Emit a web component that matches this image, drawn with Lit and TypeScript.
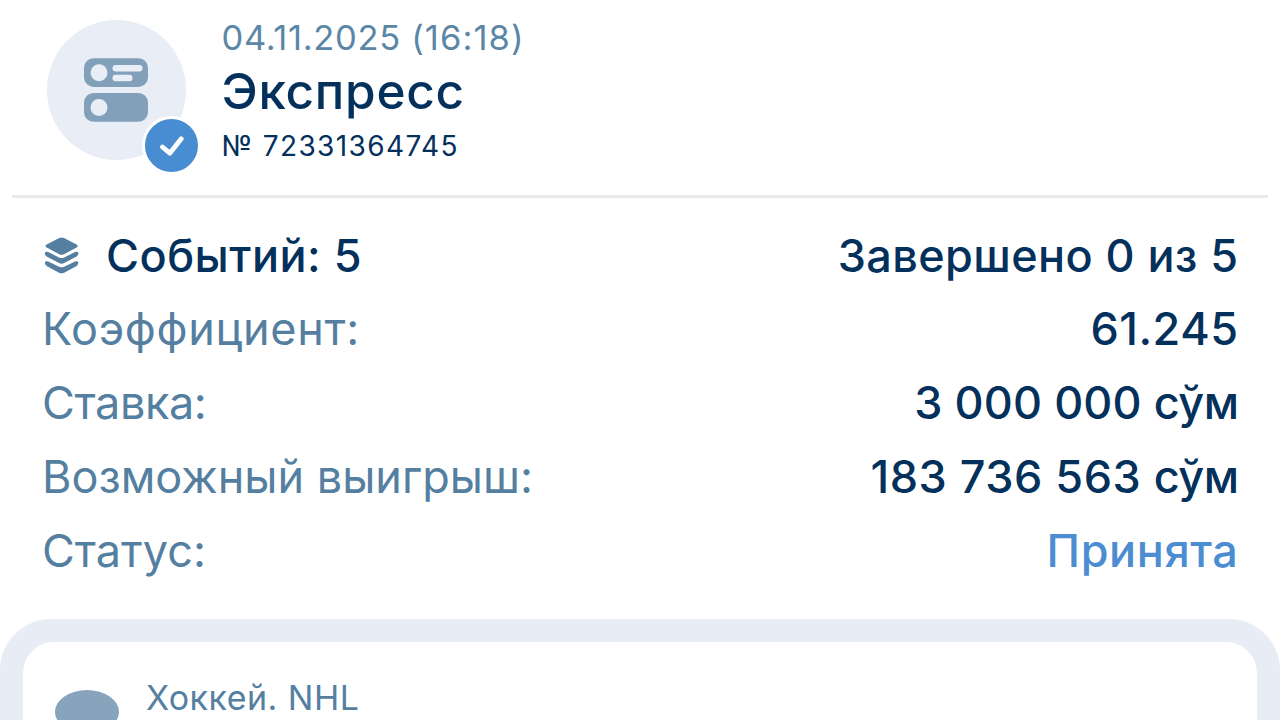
import { LitElement, html, css, svg } from "lit";
import { customElement } from "lit/decorators.js";

const couponIcon = svg`
  <svg class="coupon" viewBox="0 0 64 64">
    <rect x="0" y="0.3" width="64" height="28.6" rx="9.5" fill="#82a0ba" />
    <rect x="0" y="35" width="64" height="28.7" rx="9.5" fill="#82a0ba" />
    <circle cx="15" cy="14.7" r="8.5" fill="#e9edf5" />
    <circle cx="15" cy="49.4" r="8.5" fill="#e9edf5" />
    <rect x="28.5" y="7" width="30" height="6.6" rx="3.3" fill="#e9edf5" />
    <rect x="28.5" y="16.8" width="20" height="6.4" rx="3.2" fill="#e9edf5" />
  </svg>`;

const checkIcon = svg`
  <svg class="check" viewBox="0 0 53 53">
    <path d="M17.4 28 L24.8 34.2 L36.3 19.8" fill="none" stroke="#fff" stroke-width="4.8" stroke-linecap="round" stroke-linejoin="round" />
  </svg>`;

const layersIcon = svg`
  <svg class="layers" viewBox="0 0 36 38">
    <g fill="#557fa1">
      <path d="M15.2 1 Q17.6 0 20 1 L33 7.8 Q34.8 9 33 10.2 L20 17.2 Q17.6 18.2 15.2 17.2 L2.2 10.2 Q0.4 9 2.2 7.8 Z" />
      <path d="M1 15.6 Q1.6 14.2 4.2 15 L15 20.6 Q17.6 21.6 20.2 20.6 L31 15 Q33.6 14.2 34.2 15.6 Q34.8 18.2 32.6 19.4 L20.2 26.1 Q17.6 27.2 15 26.1 L2.6 19.4 Q0.4 18.2 1 15.6 Z" />
      <path d="M1 25.2 Q1.6 23.8 4.2 24.6 L15 29.8 Q17.6 30.8 20.2 29.8 L31 24.6 Q33.6 23.8 34.2 25.2 Q34.8 27.8 32.6 29 L20.2 35.7 Q17.6 36.8 15 35.7 L2.6 29 Q0.4 27.8 1 25.2 Z" />
    </g>
  </svg>`;

@customElement("app-root")
export class AppRoot extends LitElement {
  static styles = css`
    :host {
      display: flex;
      flex-direction: column;
      height: 720px;
      overflow: hidden;
      background: #fff;
      color: #04305c;
      font-family: Inter, "Liberation Sans", sans-serif;
      white-space: nowrap;
    }
    .header {
      display: flex;
      box-sizing: border-box;
      height: 195px;
      padding: 15px 46.5px 0;
      flex: none;
    }
    .avatar {
      position: relative;
      display: grid;
      place-items: center;
      width: 139.5px;
      height: 139.5px;
      margin: 5px 35.5px 0 0;
      border-radius: 50%;
      background: #e9edf5;
    }
    .coupon { width: 64px; height: 64px; display: block; }
    .badge {
      position: absolute;
      left: 95.5px;
      top: 96px;
      width: 53px;
      height: 53px;
      border: 3px solid #fff;
      border-radius: 50%;
      background: #488dd2;
    }
    .check { display: block; width: 53px; height: 53px; }
    .date { font-size: 34.5px; line-height: 46px; letter-spacing: 0.66px; color: #5c86a6; }
    .time { letter-spacing: 1.1px; }
    .title { font-size: 49.5px; line-height: 60px; font-weight: 500; letter-spacing: 0.7px; }
    .number { font-size: 28px; line-height: 51px; letter-spacing: 1.38px; }
    .divider { height: 3px; margin: 0 12px; background: #e7e9ec; flex: none; }
    .rows { padding: 21px 41.5px 0 42px; flex: none; }
    .row {
      display: flex;
      justify-content: space-between;
      height: 74px;
      font-size: 45px;
      line-height: 74px;
    }
    .row:first-child { height: 73px; }
    .label { color: #557fa1; }
    .strong {
      display: flex;
      align-items: center;
      height: 74px;
      font-weight: 500;
      letter-spacing: 0.5px;
    }
    .layers { width: 36px; height: 38px; margin: 0 26px 1px 2px; }
    .value { font-weight: 500; }
    .finished { letter-spacing: 0.4px; }
    .ratio { letter-spacing: 0.5px; }
    .money { letter-spacing: 0.1px; }
    .payout { letter-spacing: 0.5px; }
    .currency { letter-spacing: -0.5px; }
    .odds { letter-spacing: 0.66px; }
    .stake { letter-spacing: -0.4px; }
    .accepted { color: #4b8dd0; letter-spacing: 0.6px; }
    .events {
      box-sizing: border-box;
      height: 300px;
      margin-top: 31px;
      flex: none;
      padding: 23px 23px 0;
      border-radius: 51px 51px 0 0;
      background: #e8ecf4;
    }
    .card {
      display: flex;
      box-sizing: border-box;
      height: 300px;
      padding: 32px 32px 0;
      border-radius: 31px 31px 0 0;
      background: #fff;
    }
    .puck {
      width: 64px;
      height: 44px;
      margin: 16px 27px 0 0;
      border-radius: 50%;
      background: #87a4bc;
    }
    .league { font-size: 34px; line-height: 48px; letter-spacing: 0.48px; color: #557fa1; }
  `;

  render() {
    return html`
      <div class="header">
        <div class="avatar">
          ${couponIcon}
          <div class="badge">${checkIcon}</div>
        </div>
        <div>
          <div class="date">04.11.2025 <span class="time">(16:18)</span></div>
          <div class="title">Экспресс</div>
          <div class="number">№ 72331364745</div>
        </div>
      </div>
      <div class="divider"></div>
      <div class="rows">
        <div class="row">
          <div class="strong">${layersIcon}<span>Событий: 5</span></div>
          <div class="value finished">Завершено 0 из 5</div>
        </div>
        <div class="row">
          <div class="label odds">Коэффициент:</div>
          <div class="value ratio">61.245</div>
        </div>
        <div class="row">
          <div class="label stake">Ставка:</div>
          <div class="value money">3 000 000 <span class="currency">сўм</span></div>
        </div>
        <div class="row">
          <div class="label">Возможный выигрыш:</div>
          <div class="value payout">183 736 563 <span class="currency">сўм</span></div>
        </div>
        <div class="row">
          <div class="label">Статус:</div>
          <div class="value accepted">Принята</div>
        </div>
      </div>
      <div class="events">
        <div class="card">
          <div class="puck"></div>
          <div class="league">Хоккей. NHL</div>
        </div>
      </div>
    `;
  }
}
